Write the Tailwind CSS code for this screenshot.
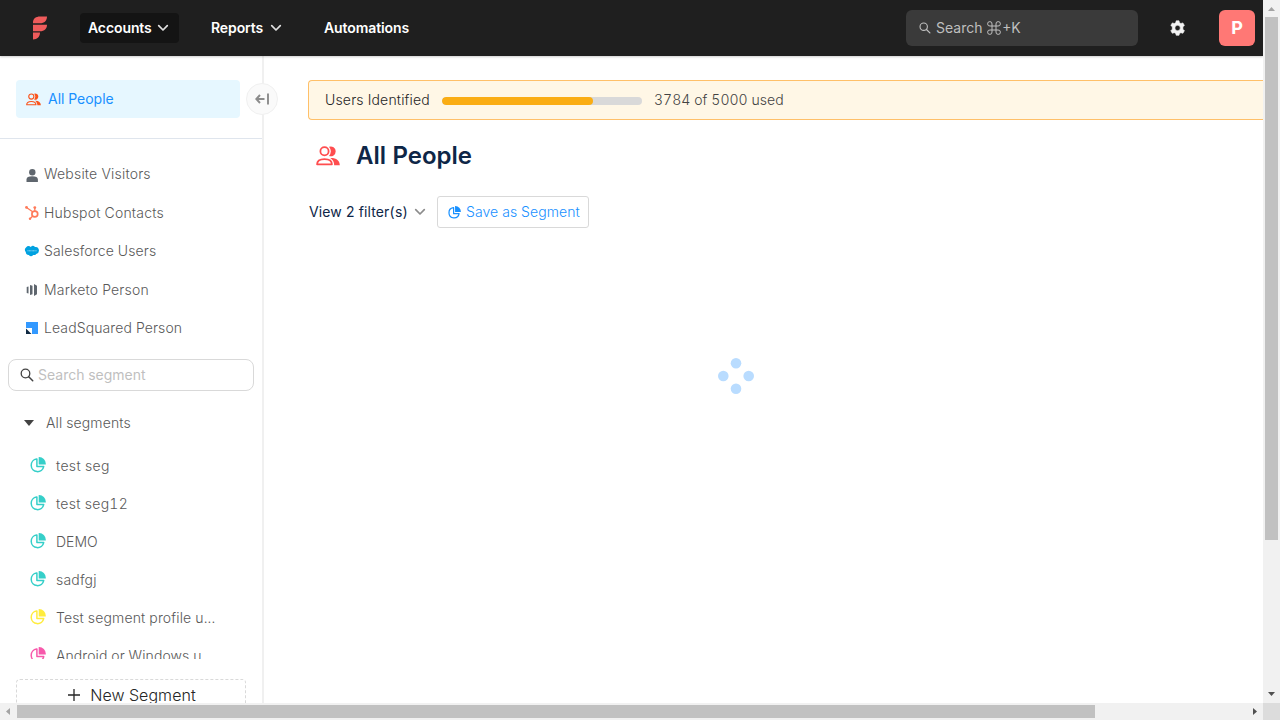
<!DOCTYPE html>
<html lang="en">
<head>
<meta charset="utf-8">
<title>All People</title>
<script src="https://cdn.jsdelivr.net/npm/@tailwindcss/browser@4"></script>
</head>
<body class="h-[720px] w-[1280px] overflow-hidden bg-white font-['Inter',sans-serif] text-sm text-[#595959] tabular-nums">
<svg class="hidden">
  <symbol id="pie" viewBox="0 0 16 16"><path d="M6.600 2.100A6.300 6.300 0 1 0 13.700 9.500H6.900V2.100Z" fill="none" stroke="currentColor" stroke-width="1.500" stroke-linejoin="round"/><path d="M8.700.1h.4a6.700 6.700 0 0 1 6.700 6.700v.6H8.700Z" fill="currentColor"/></symbol>
  <symbol id="people" viewBox="0 0 24 20"><circle cx="8.500" cy="5.300" r="4.100" fill="none" stroke="currentColor" stroke-width="1.800"/><path d="M13 .8a4.900 4.900 0 1 1 0 9.100 7.200 7.200 0 0 0 0-9.100Z" fill="currentColor"/><path d="M1.100 18.300C1.100 15 4 13.100 8.500 13.100s7.400 1.900 7.400 5.200Z" fill="none" stroke="currentColor" stroke-width="1.800" stroke-linejoin="round"/><path d="M14.300 11.900c6-.2 9.500 2.500 9.500 7.300h-5.600c0-3.100-1.400-5.700-3.900-7.300Z" fill="currentColor"/></symbol>
  <symbol id="search" viewBox="0 0 14 14"><circle cx="5.500" cy="5.500" r="4.300" fill="none" stroke="currentColor" stroke-width="1.300"/><path d="m8.700 8.700 4 4" fill="none" stroke="currentColor" stroke-width="1.500" stroke-linecap="round"/></symbol>
  <symbol id="chev" viewBox="0 0 12 8"><path d="m1.700 1.700 4.300 4.300 4.300-4.300" fill="none" stroke="currentColor" stroke-width="1.700" stroke-linecap="round" stroke-linejoin="round"/></symbol>
</svg>
<div class="grid h-full grid-cols-[1263px_17px] grid-rows-[703px_17px]">
  <div class="flex flex-col overflow-hidden">
    <header class="z-10 flex h-14 shrink-0 items-center bg-[#1f1f1f] pr-2 pl-8 font-semibold tracking-[-0.1px] text-white shadow-[0_1px_2px_rgba(0,0,0,0.2)]">
      <svg class="mr-8 h-6 w-4 text-[#ef5b5b]" viewBox="0 0 16 24" fill="currentColor"><path d="M1 7.300V6.500C1 2.500 4 .5 8 .5h7c0 4-2.500 6.800-7 6.800ZM1 8.700h14c0 4-2.500 6.500-7 6.500H1ZM1 16.600h7c0 4-2.500 6.900-7 6.900Z"/></svg>
      <div class="flex h-[30px] w-[99px] items-center rounded bg-[#141414] pl-2"><span class="w-[69px]">Accounts</span><svg class="h-2 w-3 text-[#e0e0e0]"><use href="#chev"/></svg></div>
      <div class="ml-8 flex w-[81px] items-center"><span class="w-[59px]">Reports</span><svg class="h-2 w-3 text-[#e0e0e0]"><use href="#chev"/></svg></div>
      <div class="ml-8">Automations</div>
      <div class="ml-auto flex h-9 w-[232px] items-center gap-[5px] rounded-md bg-[#3a3a3a] pl-[13px] font-normal tracking-normal text-[#bfbfbf]"><svg class="size-3"><use href="#search"/></svg><span class="flex items-center">Search&nbsp;<svg class="mx-[1px] size-3.5" viewBox="0 0 14 14" fill="none" stroke="currentColor"><path d="M5 5H3a2.200 2.200 0 1 1 2-2v8a2.200 2.200 0 1 1-2-2h8a2.200 2.200 0 1 1-2 2V3a2.200 2.200 0 1 1 2 2H5Z"/></svg>+K</span></div>
      <svg class="ml-8 size-4" viewBox="0 0 16 16"><path fill="#f3f3f3" stroke="#f3f3f3" stroke-width=".6" stroke-linejoin="round" fill-rule="evenodd" d="m6.200.8h2.800l.5 1.900 1.400.8 2-.6 1.500 2.600-1.500 1.300v2.400l1.500 1.500-1.500 2.600-2-.6-1.400.8-.5 1.800h-2.800l-.5-1.800-1.400-.8-2 .6-1.500-2.600 1.500-1.500V6.800L.8 5.500l1.500-2.600 2 .6 1.400-.8ZM7.600 5.300a2.700 2.700 0 1 0 0 5.400 2.700 2.700 0 0 0 0-5.400Z"/></svg>
      <div class="ml-[33px] flex size-9 items-center justify-center rounded-md bg-[#ff7875] text-lg font-bold">P</div>
    </header>
    <div class="flex min-h-0 flex-1">
      <aside class="relative flex w-[264px] shrink-0 flex-col border-r-2 border-[#f0f0f0] font-light">
        <div class="flex h-[83px] shrink-0 items-start border-b border-[#dfe5ed] pt-6 pl-4">
          <div class="flex h-[38px] w-56 items-center gap-[7px] rounded bg-[#e6f7ff] pl-2.5 font-normal text-[#1890ff]"><svg class="h-[13px] w-[15px] text-[#fa541c]"><use href="#people"/></svg>All People</div>
        </div>
        <nav class="flex flex-col pt-4 pl-6 tracking-[0.2px]">
          <div class="flex h-[38.500px] items-center gap-1"><svg class="mt-[3px] size-4" viewBox="0 0 16 16" fill="#5f666e"><circle cx="8.300" cy="4.300" r="3.200"/><path d="M2.500 14v-2.500c0-2.300 2-3.200 5.700-3.200s5.700.9 5.700 3.200V14Z"/></svg>Website Visitors</div>
          <div class="flex h-[38.500px] items-center gap-1"><svg class="size-4" viewBox="0 0 16 16" fill="none" stroke="#ff7a59"><circle cx="10.800" cy="9" r="2.900" stroke-width="1.700"/><path d="M2.500 2.500 9 7M10.800 6V3M8.500 11.300 6.300 13.500" stroke-width="1.300"/><g fill="#ff7a59" stroke="none"><circle cx="2.500" cy="2.400" r="1.400"/><circle cx="10.800" cy="2.600" r="1.400"/><circle cx="6" cy="13.700" r="1.200"/></g></svg>Hubspot Contacts</div>
          <div class="flex h-[38.500px] items-center gap-1 tracking-[0.12px]"><svg class="size-4" viewBox="0 0 16 16"><path fill="#00a1e0" d="M6.800 4A2.800 2.800 0 0 1 11 4 3.300 3.500 0 1 1 12.200 10.900 2.800 2.800 0 0 1 9.200 12 3 3 0 0 1 4.800 12 2.800 2.800 0 0 1 1.800 9 2.900 2.900 0 0 1 2 4.500 3.500 3.500 0 0 1 6.800 4Z"/><path d="M3.500 7.800h9" stroke="#d5f1fc" stroke-width=".7" stroke-dasharray="1 .4"/></svg>Salesforce Users</div>
          <div class="flex h-[38.500px] items-center gap-1 tracking-[0.17px]"><svg class="size-4" viewBox="0 0 16 16" fill="#5f666e"><path d="M2.700 5 4.500 4.500v7L2.700 11ZM6 3l2.500.8v8.400L6 13ZM10 2l3 1.800v8.400L10 14Z"/></svg>Marketo Person</div>
          <div class="flex h-[38.500px] items-center gap-1 tracking-[0.11px]"><svg class="size-4" viewBox="0 0 16 16"><path fill="#3399ff" d="M2 2h12v12H2Z"/><path fill="#fff" d="M2 8h6v6H2Z"/><path fill="#102a43" d="M2 8.500 7.500 14H2Z"/></svg>LeadSquared Person</div>
        </nav>
        <div class="mt-[11.500px] ml-2 flex h-8 w-[246px] shrink-0 items-center gap-1 rounded-lg border border-[#d9d9d9] pl-[11px] font-normal text-[#bfbfbf]"><svg class="size-3.5 text-[#434343]"><use href="#search"/></svg>Search segment</div>
        <div class="mt-3 flex h-10 shrink-0 items-center gap-3 pl-6 tracking-[0.12px]"><svg class="h-1.5 w-2.5" viewBox="0 0 10 6" fill="#434343"><path d="M0 0h10L5 6Z"/></svg>All segments</div>
        <div class="flex h-[216px] shrink-0 flex-col overflow-hidden pt-1 pl-[30px]">
          <div class="flex h-[38px] shrink-0 items-center gap-2.5 tracking-[0.33px]"><svg class="mb-0.5 size-4 text-[#36cfc9]"><use href="#pie"/></svg>test seg</div>
          <div class="flex h-[38px] shrink-0 items-center gap-2.5 tracking-[0.28px]"><svg class="mb-0.5 size-4 text-[#36cfc9]"><use href="#pie"/></svg>test seg12</div>
          <div class="flex h-[38px] shrink-0 items-center gap-2.5"><svg class="mb-0.5 size-4 text-[#36cfc9]"><use href="#pie"/></svg>DEMO</div>
          <div class="flex h-[38px] shrink-0 items-center gap-2.5 tracking-[0.18px]"><svg class="mb-0.5 size-4 text-[#36cfc9]"><use href="#pie"/></svg>sadfgj</div>
          <div class="flex h-[38px] shrink-0 items-center gap-2.5 tracking-[0.15px]"><svg class="mb-0.5 size-4 text-[#ffec3d]"><use href="#pie"/></svg>Test segment profile u...</div>
          <div class="flex h-[38px] shrink-0 items-center gap-2.5 tracking-[0.08px]"><svg class="mb-0.5 size-4 text-[#f759ab]"><use href="#pie"/></svg>Android or Windows u...</div>
        </div>
        <div class="mt-5 ml-4 flex h-8 w-[230px] shrink-0 items-center justify-center gap-2.5 rounded border border-dashed border-[#d9d9d9] pl-0.5 text-base tracking-[0.06px] text-[#262626]"><svg class="size-3" viewBox="0 0 12 12" stroke="#262626" stroke-width="1.300"><path d="M6 0v12M0 6h12"/></svg>New Segment</div>
        <div class="absolute top-[27px] left-[246px] flex size-8 items-center justify-center rounded-full border border-[#f0f0f0] bg-[#fafafa]"><svg class="mb-px h-3 w-3.5" viewBox="0 0 14 12" fill="none" stroke="#8c8c8c" stroke-width="1.900"><path d="M9.500 6H1.500M5 2 1.300 6 5 10M13 .5v11"/></svg></div>
      </aside>
      <main class="flex min-w-0 flex-1 flex-col pt-6 pl-11">
        <div class="flex h-10 shrink-0 items-center rounded-l border border-r-0 border-[#ffc069] bg-[#fff7e6] pl-4 font-light text-[#262626]"><span class="w-[117px] tracking-[0.17px]">Users Identified</span>
          <div class="mt-0.5 h-2 w-[200px] overflow-hidden rounded-full bg-[#d9d9d9]"><div class="h-full rounded-full bg-[#faad14]" style="width:75.680%"></div></div>
          <span class="ml-3 tracking-[0.05px] text-[#434343]">3784 of 5000 used</span></div>
        <div class="mt-4 flex h-10 items-center gap-4 pl-2 text-2xl font-semibold text-[#0e2647]"><svg class="h-5 w-6 text-[#ff4d4f]"><use href="#people"/></svg>All People</div>
        <div class="mt-5 flex h-8 items-center pl-px text-[#0e2647]"><span class="w-[105px] tracking-[0.1px]">View 2 filter(s)</span><svg class="h-2 w-3 text-[#8c8c8c]"><use href="#chev"/></svg>
          <div class="ml-[11px] flex h-8 w-[152px] items-center gap-[5px] rounded-[3px] border border-[#d9d9d9] pl-2.5 font-light tracking-[0.09px] text-[#1890ff]"><svg class="size-[13px]"><use href="#pie"/></svg>Save as Segment</div></div>
        <svg class="mt-[130px] ml-[410px] size-9" viewBox="0 0 36 36" fill="#b9dcff"><circle cx="18" cy="5.300" r="5.300"/><circle cx="5.300" cy="18" r="5.300"/><circle cx="30.700" cy="18" r="5.300"/><circle cx="18" cy="30.700" r="5.300"/></svg>
      </main>
    </div>
  </div>
  <div class="flex flex-col items-center bg-[#f1f1f1]">
    <svg class="h-[17px] w-[17px]" viewBox="0 0 17 17"><path d="M5 11h7L8.500 7Z" fill="#a3a3a3"/></svg>
    <div class="h-[523px] w-[13px] bg-[#c1c1c1]"></div>
    <svg class="mt-auto h-[17px] w-[17px]" viewBox="0 0 17 17"><path d="M5 6h7l-3.500 4Z" fill="#505050"/></svg>
  </div>
  <div class="flex items-center bg-[#f1f1f1]">
    <svg class="h-[17px] w-[17px]" viewBox="0 0 17 17"><path d="M10 5v7L6 8.500Z" fill="#a3a3a3"/></svg>
    <div class="h-[13px] w-[1078px] bg-[#c1c1c1]"></div>
    <svg class="ml-auto h-[17px] w-[17px]" viewBox="0 0 17 17"><path d="M7 5v7l4-3.500Z" fill="#505050"/></svg>
  </div>
  <div class="bg-[#dcdcdc]"></div>
</div>
</body>
</html>
